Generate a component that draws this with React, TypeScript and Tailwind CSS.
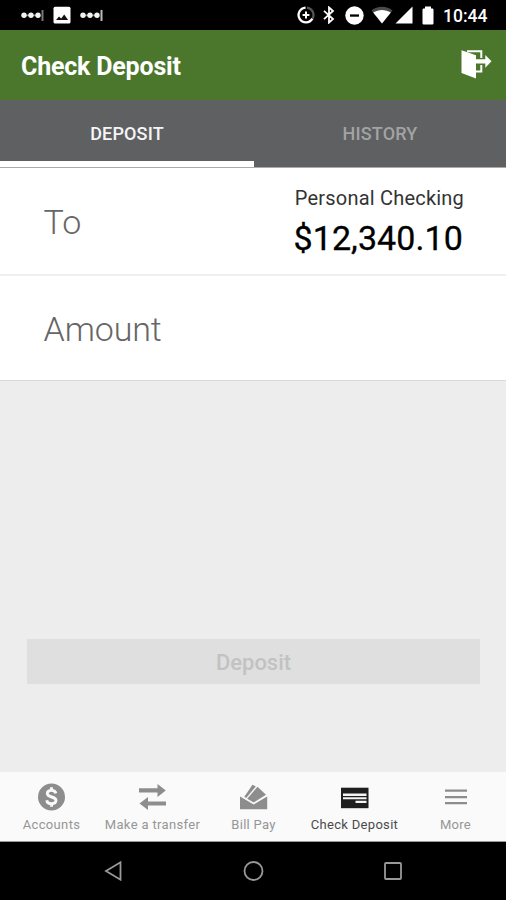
import type { ReactNode } from "react";

function DotsIcon({ bar }: { bar: string }) {
  return (
    <svg width="24" height="14" viewBox="0 0 24 14" fill="#f2f2f2">
      <circle cx="3" cy="7.3" r="2.7" />
      <circle cx="10" cy="7.3" r="2.7" />
      <circle cx="17" cy="7.3" r="2.7" />
      <path d="M3 6.5h14v1.6H3z" opacity=".5" />
      <path d="M20.5 2h2v11h-2z" fill={bar} />
    </svg>
  );
}

function ImageIcon() {
  return (
    <svg width="18" height="18" viewBox="0 0 18 18">
      <rect x=".5" y=".7" width="17" height="16.8" rx="1.6" fill="#fff" />
      <path d="M3 14l3-3.600 2.200 2 3-4 3.900 5.600z" fill="#111" />
    </svg>
  );
}

function DataSaverIcon() {
  return (
    <svg width="18" height="18" viewBox="0 0 18 18" fill="none" strokeWidth="2.3">
      <path d="M10 1.6a7.4 7.4 0 0 1 5.6 10.8" stroke="#555" />
      <path d="M8.6 1.6a7.4 7.4 0 1 0 6.8 11.1" stroke="#fff" />
      <path d="M9 5.6v6.8M5.6 9h6.8" stroke="#fff" strokeWidth="2" />
    </svg>
  );
}

function BluetoothIcon() {
  return (
    <svg width="12" height="18" viewBox="0 0 12 18" fill="none" stroke="#fff" strokeWidth="1.8">
      <path d="M1 4.8l9 8.2-4 3.6V1.4L10 5l-9 8.2" />
    </svg>
  );
}

function DoNotDisturbIcon() {
  return (
    <svg width="19" height="19" viewBox="0 0 19 19">
      <circle cx="9.5" cy="9.5" r="9.2" fill="#fff" />
      <path d="M5 8.4h9v2.3H5z" fill="#000" />
    </svg>
  );
}

function WifiIcon() {
  return (
    <svg width="22" height="18" viewBox="0 0 22 18">
      <path d="M11 17.5L.5 4.4C6.5-.6 15.5-.6 21.5 4.4z" fill="#4a4a4a" />
      <path d="M11 17.5L2.200 6.600c5.200-3.600 12.400-3.600 17.600 0z" fill="#fff" />
    </svg>
  );
}

function SignalIcon() {
  return (
    <svg width="18" height="18" viewBox="0 0 18 18">
      <path d="M17.5.5v17H.5z" fill="#fff" />
    </svg>
  );
}

function BatteryIcon() {
  return (
    <svg width="12" height="19" viewBox="0 0 12 19">
      <path d="M3 .5h6v2h1.300q1.200 0 1.200 1.200v13.600q0 1.200-1.200 1.200H1.700Q.5 18.500.5 17.300V3.700Q.5 2.500 1.700 2.500H3z" fill="#fff" />
    </svg>
  );
}

function LogoutIcon() {
  return (
    <svg width="32" height="30" viewBox="0 0 32 30" fill="#fff">
      <path d="M7 2.300h14.300V9M21.300 16v6.400h-5.500" fill="none" stroke="#fff" strokeWidth="2" />
      <path d="M1.500 1.300L16 6.200v23.300L1.500 24z" />
      <path d="M16 10.300h9.300V6L31.500 12.300l-6.200 6.500v-4.300H16z" />
    </svg>
  );
}

function AccountsIcon() {
  return (
    <svg width="28" height="28" viewBox="0 0 28 28">
      <circle cx="13.5" cy="14" r="13.5" fill="#8d8d8d" />
      <path
        d="M17.800 10.400c-.4-1.900-2-3-4.300-3-2.500 0-4.200 1.200-4.200 3.200 0 4.500 8.700 2.300 8.700 6.700 0 2-1.800 3.400-4.500 3.400-2.600 0-4.400-1.300-4.700-3.500M13.500 4.300v3.400M13.500 20.300v3.400"
        fill="none"
        stroke="#fafafa"
        strokeWidth="2.9"
      />
    </svg>
  );
}

function TransferIcon() {
  return (
    <svg width="28" height="28" viewBox="0 0 28 28" fill="#8d8d8d">
      <path d="M0 5.300h18.500V.9l8.300 6.600-8.300 6.500V9.500H0z" />
      <path d="M27 18.400H9V14L.5 20.500 9 27v-4.400h18z" />
    </svg>
  );
}

function BillPayIcon() {
  return (
    <svg width="28" height="28" viewBox="0 0 28 28" fill="#8d8d8d">
      <path d="M0 13.500L13.700 21.500l13.500-8v12.800H0z" />
      <path d="M4.300 13.800L12.500 1.800l3.300 1.700L6.200 15z" />
      <path d="M7.200 15.700L17.500 3.700l8.500 8-12.300 7.700z" />
    </svg>
  );
}

function CheckIcon() {
  return (
    <svg width="28" height="28" viewBox="0 0 28 28">
      <path d="M0 4.700h27.500v20.500H0z" fill="#1f1f1f" />
      <path d="M2 10.400h23.500v2.500H2zM2 14.300h23.500v2H2zM14.500 17.800h11V20h-11z" fill="#f5f5f5" />
    </svg>
  );
}

function MoreIcon() {
  return (
    <svg width="28" height="28" viewBox="0 0 28 28" fill="#8d8d8d">
      <path d="M3 6.400h22v2.400H3zM3 13.100h22v2.200H3zM3 18.900h22v2.300H3z" />
    </svg>
  );
}

const navItems: { label: string; icon: ReactNode; style: string }[] = [
  { label: "Accounts", icon: <AccountsIcon />, style: "text-[#969696] tracking-[0.35px]" },
  { label: "Make a transfer", icon: <TransferIcon />, style: "text-[#969696] tracking-[0.35px]" },
  { label: "Bill Pay", icon: <BillPayIcon />, style: "text-[#969696] tracking-[0.3px]" },
  { label: "Check Deposit", icon: <CheckIcon />, style: "text-[#4a4a4a] tracking-[0.3px]" },
  { label: "More", icon: <MoreIcon />, style: "text-[#969696] tracking-[0.3px]" },
];

export default function App() {
  return (
    <main className="flex h-[900px] w-[506px] flex-col overflow-hidden bg-[#ededed] font-[Roboto,sans-serif]">
      {/* Status bar */}
      <div className="flex h-[30px] shrink-0 items-center bg-black pl-[21px] text-white">
        <DotsIcon bar="#777" />
        <div className="ml-2">
          <ImageIcon />
        </div>
        <div className="ml-[9px]">
          <DotsIcon bar="#bbb" />
        </div>
        <div className="ml-auto flex items-center pr-[18px]">
          <DataSaverIcon />
          <div className="ml-2">
            <BluetoothIcon />
          </div>
          <div className="ml-[10px]">
            <DoNotDisturbIcon />
          </div>
          <div className="ml-[7px]">
            <WifiIcon />
          </div>
          <div className="ml-[2px]">
            <SignalIcon />
          </div>
          <div className="ml-[9px]">
            <BatteryIcon />
          </div>
          <span className="ml-[9px] w-[45px] whitespace-nowrap pt-px text-[17.5px] font-medium leading-[30px]">10:44</span>
        </div>
      </div>

      {/* Header */}
      <header className="flex h-[70px] shrink-0 items-center justify-between bg-[#4b772c] pl-[21px] pr-[14px] text-white">
        <h1 className="pt-[3px] text-[25px] font-bold tracking-[-0.2px]">Check Deposit</h1>
        <div className="pb-[2px]">
          <LogoutIcon />
        </div>
      </header>

      {/* Tabs */}
      <div className="grid h-[68px] shrink-0 grid-cols-[254px_252px] border-b border-[#aaa] bg-[#5f6062] text-center text-[18px] font-medium leading-[68px] tracking-[0.15px]">
        <div className="h-[67px] border-b-[6px] border-white text-[#f5f5f5]">DEPOSIT</div>
        <div className="text-[#a3a3a4]">HISTORY</div>
      </div>

      {/* Form */}
      <section className="flex h-[108px] shrink-0 justify-between border-b-2 border-[#efefef] bg-white pl-[43.5px] pr-[42px]">
        <span className="text-[34px] font-light leading-[109px] text-[#666]">To</span>
        <div className="pt-4 text-right text-black">
          <p className="text-[20px] font-normal leading-7 tracking-[0.2px] text-[#333]">Personal Checking</p>
          <p className="mt-2 pr-px text-[34px] font-normal leading-9 tracking-[0.1px] [-webkit-text-stroke:0.3px_black]">$12,340.10</p>
        </div>
      </section>
      <section className="h-[105px] shrink-0 border-b border-[#d8d8d8] bg-white pl-[43.5px]">
        <span className="text-[34px] font-light leading-[107px] tracking-[-0.1px] text-[#666]">Amount</span>
      </section>

      <div className="flex grow flex-col justify-end pb-[88px] pl-[27px] pr-[26px]">
        <button className="h-[45px] w-full bg-[#dfdfdf] pt-px text-[22px] font-medium text-[#c2c2c2]" disabled>
          Deposit
        </button>
      </div>

      {/* Bottom navigation */}
      <nav className="grid h-[70px] shrink-0 grid-cols-5 border-b border-[#999] bg-[#fafafa] pl-px">
        {navItems.map((item) => (
          <a key={item.label} className="flex flex-col items-center pt-[11px]">
            {item.icon}
            <span className={`mt-1 whitespace-nowrap text-[13px] leading-5 ${item.style}`}>{item.label}</span>
          </a>
        ))}
      </nav>

      {/* System buttons */}
      <div className="flex h-[58px] shrink-0 items-center justify-between bg-black px-[103px]">
        <svg width="20" height="22" viewBox="0 0 20 22" fill="none" stroke="#999" strokeWidth="1.8">
          <path d="M17.5 2.300v17.400L3 11z" />
        </svg>
        <svg width="22" height="22" viewBox="0 0 22 22" fill="none" stroke="#999" strokeWidth="1.8">
          <circle cx="11.5" cy="11" r="9" />
        </svg>
        <svg width="20" height="20" viewBox="0 0 20 20" fill="none" stroke="#999" strokeWidth="1.8">
          <rect x="2" y="2" width="16" height="16" rx="1" />
        </svg>
      </div>
    </main>
  );
}
